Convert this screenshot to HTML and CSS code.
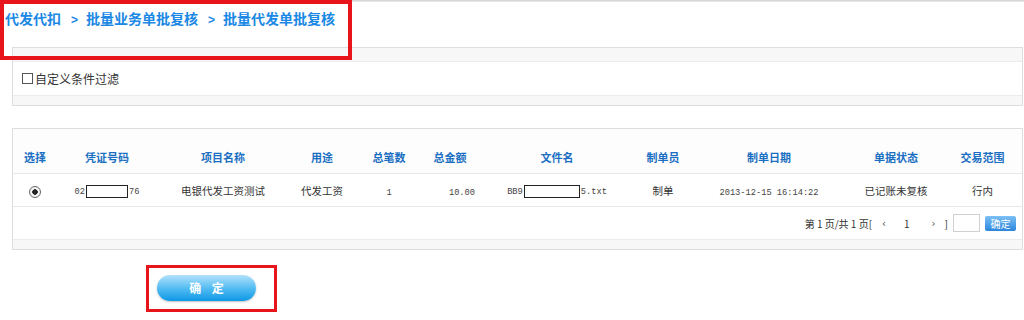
FILE: index.html
```html
<!DOCTYPE html>
<html lang="zh-CN">
<head>
<meta charset="utf-8">
<title>批量代发单批复核</title>
<link rel="stylesheet" href="styles.css">
</head>
<body>
<div class="topline"></div>
<div class="crumb-wrap">
  <div class="crumb">
    <span>代发代扣</span><span class="sep">&gt;</span><span>批量业务单批复核</span><span class="sep">&gt;</span><span>批量代发单批复核</span>
  </div>
  <div class="mark mark-top"></div>
</div>

<div class="panel filter">
  <div class="band band-top"></div>
  <div class="filter-body"><span class="chk"></span>自定义条件过滤</div>
  <div class="band band-bottom"></div>
</div>

<div class="panel list">
  <table class="grid">
    <colgroup>
      <col class="c1"><col class="c2"><col class="c3"><col class="c4"><col class="c5"><col class="c6"><col class="c7"><col class="c8"><col class="c9"><col class="c10"><col class="c11">
    </colgroup>
    <thead>
      <tr>
        <th>选择</th><th>凭证号码</th><th>项目名称</th><th>用途</th><th>总笔数</th><th>总金额</th><th>文件名</th><th>制单员</th><th>制单日期</th><th>单据状态</th><th>交易范围</th>
      </tr>
    </thead>
    <tbody>
      <tr class="data">
        <td><span class="radio"></span></td>
        <td><span class="mono">02</span><span class="mask m1"></span><span class="mono">76</span></td>
        <td>电银代发工资测试</td>
        <td>代发工资</td>
        <td><span class="mono">1</span></td>
        <td class="amt"><span class="mono">10.00</span></td>
        <td><span class="mono">BB9</span><span class="mask m2"></span><span class="mono">5.txt</span></td>
        <td>制单</td>
        <td><span class="mono">2013-12-15 16:14:22</span></td>
        <td>已记账未复核</td>
        <td>行内</td>
      </tr>
      <tr class="pager-row">
        <td colspan="11">
          <div class="pager">
            <span class="pinfo">第 1 页/共 1 页[</span>
            <span class="parrow prev">‹</span>
            <span class="pnum">1</span>
            <span class="parrow next">›</span>
            <span class="pinfo pend">]</span>
            <span class="pinput"></span>
            <span class="pbtn">确定</span>
          </div>
        </td>
      </tr>
    </tbody>
  </table>
  <div class="band band-bottom"></div>
</div>

<div class="actions">
  <div class="btn-wrap">
    <span class="btn">确 定</span>
    <div class="mark mark-btn"></div>
  </div>
</div>
</body>
</html>
```

FILE: styles.css
```css
html, body {
  margin: 0;
  padding: 0;
  background: #ffffff;
  font-family: "Noto Sans CJK SC", "Liberation Sans", sans-serif;
  color: #333333;
  width: 1024px;
  height: 320px;
  overflow: hidden;
}

.topline {
  height: 2px;
  background: linear-gradient(#cfcfcf, #ececec);
}

.crumb-wrap {
  position: relative;
  height: 45px;
}

.crumb {
  padding: 8px 0 0 5px;
  font-size: 14px;
  font-weight: bold;
  color: #1a88e4;
  line-height: 16px;
  white-space: nowrap;
}

.crumb .sep {
  display: inline-block;
  margin: 0 8px 0 10px;
  font-family: "Liberation Sans", sans-serif;
  font-size: 12px;
  font-weight: bold;
}

.mark {
  position: absolute;
  border: 4px solid #e8141c;
  box-sizing: border-box;
}

.mark-top {
  left: 0;
  top: -2px;
  width: 352px;
  height: 60px;
}

.panel {
  margin: 0 1px 0 12px;
  border: 1px solid #dedede;
  background: #ffffff;
}

.band {
  background: #f7f7f7;
}

.band-top {
  height: 13px;
  border-bottom: 1px solid #ececec;
}

.band-bottom {
  height: 9px;
  border-top: 1px solid #ececec;
}

.filter-body {
  height: 33px;
  display: flex;
  align-items: center;
  padding-left: 9px;
  font-size: 12px;
  color: #333333;
}

.chk {
  width: 9px;
  height: 9px;
  border: 1px solid #555555;
  margin-right: 2px;
  background: #ffffff;
}

.list {
  margin-top: 22px;
}

.grid {
  width: 100%;
  border-collapse: collapse;
  table-layout: fixed;
}

.c1 { width: 44px; }
.c2 { width: 100px; }
.c3 { width: 132px; }
.c4 { width: 66px; }
.c5 { width: 68px; }
.c6 { width: 54px; }
.c7 { width: 160px; }
.c8 { width: 52px; }
.c9 { width: 160px; }
.c10 { width: 94px; }
.c11 { width: auto; }

.grid th {
  height: 36px;
  padding: 0 0 8px 0;
  vertical-align: bottom;
  font-size: 11px;
  font-weight: bold;
  color: #1b6fc2;
  text-align: center;
  white-space: nowrap;
  border-bottom: 1px solid #e8e8e8;
  background: #fdfdfd;
}

.grid td {
  text-align: center;
  font-size: 10.5px;
  color: #333333;
  white-space: nowrap;
  padding: 0;
}

.data td {
  height: 32px;
  border-bottom: 1px solid #e8e8e8;
  vertical-align: middle;
}

.data td.amt {
  text-align: right;
  padding-right: 2px;
}

.mono {
  font-family: "Liberation Mono", monospace;
  font-size: 8.7px;
  color: #444444;
}

.mask {
  display: inline-block;
  vertical-align: middle;
  height: 11px;
  border: 1px solid #222222;
  background: #ffffff;
  margin: 0 1px;
}

.m1 { width: 40px; }
.m2 { width: 54px; }

.radio {
  display: inline-block;
  vertical-align: middle;
  width: 10px;
  height: 10px;
  border: 1px solid #666666;
  border-radius: 50%;
  background: radial-gradient(circle, #222 0 2.5px, #f4f4f4 3px);
}

.pager-row td {
  height: 32px;
}

.pager {
  display: flex;
  justify-content: flex-end;
  align-items: center;
  padding-right: 6px;
  font-size: 10px;
  color: #333333;
}

.pinfo {
  white-space: pre;
}

.parrow {
  font-family: "DejaVu Sans", sans-serif;
  font-size: 10px;
  color: #555555;
}

.prev {
  margin-left: 10px;
}

.pnum {
  margin: 0 22px 0 18px;
}

.pend {
  margin-left: 9px;
  margin-right: 5px;
}

.pinput {
  width: 25px;
  height: 16px;
  border: 1px solid #d0d0d0;
  background: #ffffff;
  margin-right: 5px;
}

.pbtn {
  width: 31px;
  height: 15px;
  line-height: 15px;
  border-radius: 2px;
  background: linear-gradient(#7cc0f5, #2b86dc);
  color: #ffffff;
  font-size: 10px;
  text-align: center;
}

.actions {
  padding: 25px 0 0 157px;
}

.btn-wrap {
  position: relative;
  width: 99px;
}

.btn {
  display: block;
  width: 99px;
  height: 26px;
  line-height: 26px;
  border-radius: 13px;
  background: linear-gradient(#b3e2fb, #55bdf2 50%, #0d98e6);
  box-shadow: 0 1px 2px rgba(0, 0, 0, 0.25);
  color: #ffffff;
  font-size: 12px;
  font-weight: bold;
  text-align: center;
  letter-spacing: 4px;
  text-indent: 4px;
}

.mark-btn {
  border-width: 3px;
  left: -11px;
  top: -10px;
  width: 131px;
  height: 47px;
}
```
